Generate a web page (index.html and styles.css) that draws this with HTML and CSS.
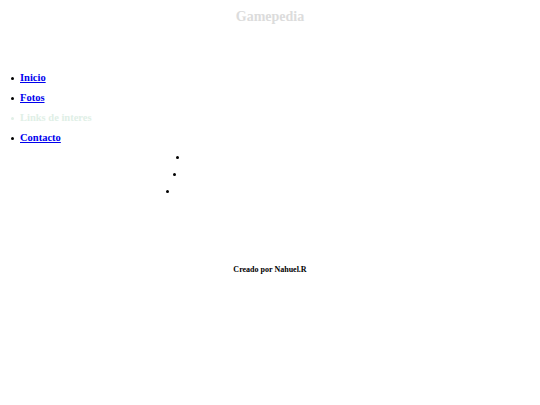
FILE: index.html
```html
<!DOCTYPE html>
<html lang="es">
<head>
<meta charset="utf-8">
<title>Gamepedia</title>
<link rel="stylesheet" href="styles.css">
</head>
<body>
<header class="header">
  <h1 class="title">Gamepedia</h1>
</header>
<nav class="nav">
  <ul class="menu">
    <li class="menu-item"><a class="menu-link" href="#">Inicio</a></li>
    <li class="menu-item"><a class="menu-link" href="#">Fotos</a></li>
    <li class="menu-item menu-item-faded">Links de interes</li>
    <li class="menu-item"><a class="menu-link" href="#">Contacto</a></li>
  </ul>
</nav>
<ul class="dots">
  <li class="dot dot-1"></li>
  <li class="dot dot-2"></li>
  <li class="dot dot-3"></li>
</ul>
<footer class="footer">
  <p class="credit">Creado por Nahuel.R</p>
</footer>
</body>
</html>
```
FILE: styles.css
```css
html, body {
  margin: 0;
  padding: 0;
  background: #ffffff;
}
body {
  font-family: "Liberation Serif", "Times New Roman", serif;
  color: #000000;
}
.header {
  padding-top: 9px;
  height: 60px;
  box-sizing: border-box;
}
.title {
  margin: 0;
  text-align: center;
  font-size: 14px;
  line-height: 16px;
  font-weight: bold;
  color: #dcdcdc;
}
.nav {
  padding-top: 10px;
}
.menu {
  margin: 0;
  padding: 0 0 0 20px;
  list-style: none;
  font-size: 10.5px;
  font-weight: bold;
}
.menu-item {
  height: 20px;
  line-height: 16px;
  position: relative;
}
.menu-item::before {
  content: "";
  position: absolute;
  left: -9px;
  top: 7px;
  width: 3px;
  height: 3px;
  border-radius: 50%;
  background: #000000;
}
.menu-item-faded::before {
  background: #e0efe6;
}
.menu-link {
  color: #0000ee;
  text-decoration: underline;
}
.menu-item-faded {
  color: #e0efe6;
}
.dots {
  margin: 0;
  padding: 0;
  list-style: disc;
  font-size: 10px;
}
.dot {
  height: 17px;
  line-height: 15px;
}
.dot-1 { margin-left: 189px; }
.dot-2 { margin-left: 186px; }
.dot-3 { margin-left: 179px; }
.footer {
  padding-top: 64px;
}
.credit {
  margin: 0;
  text-align: center;
  font-size: 8px;
  line-height: 10px;
  font-weight: bold;
}
```
